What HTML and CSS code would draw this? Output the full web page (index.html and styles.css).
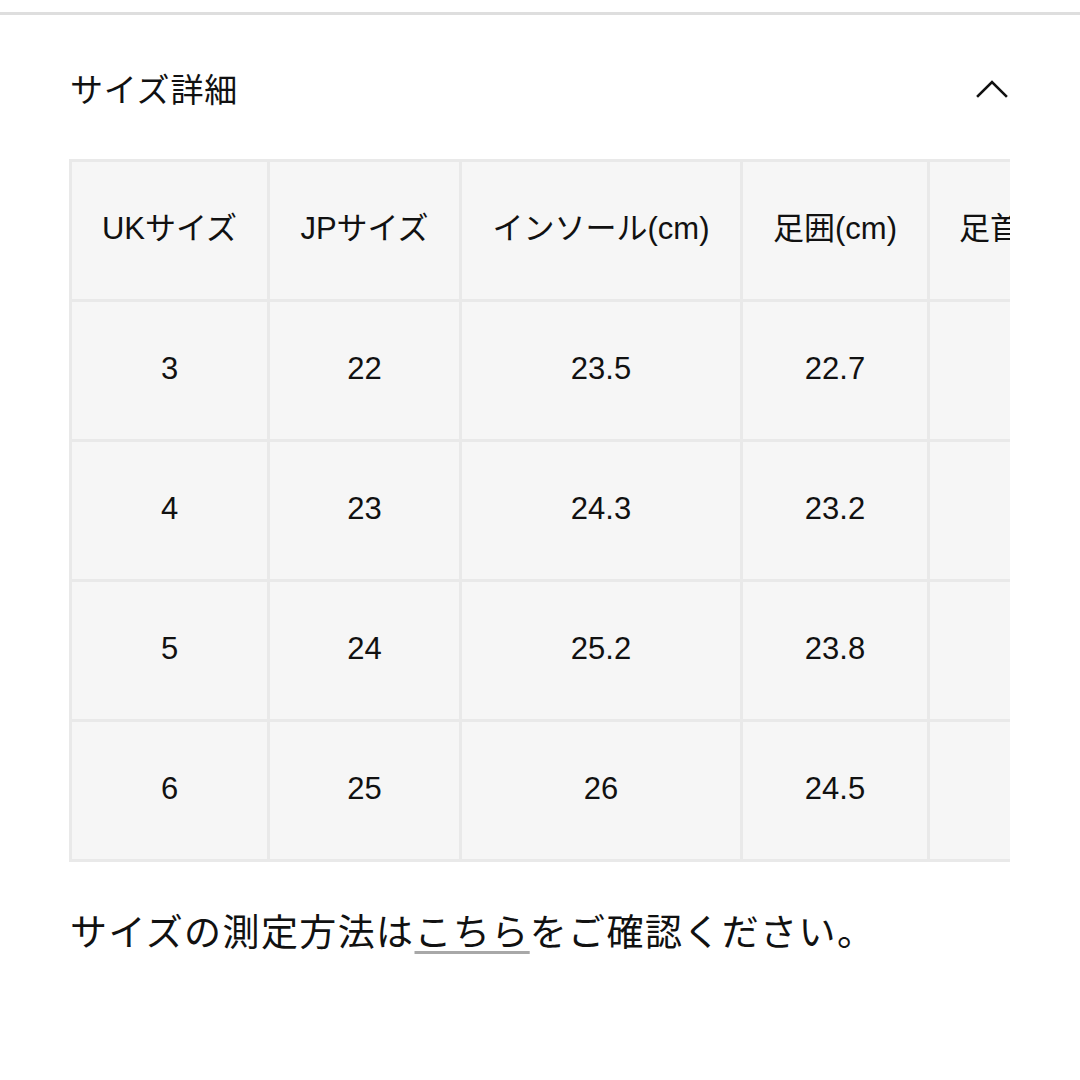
FILE: index.html
```html
<!DOCTYPE html>
<html lang="ja">
<head>
<meta charset="utf-8">
<title>サイズ詳細</title>
<link rel="stylesheet" href="styles.css">
</head>
<body>
<div class="page">
  <div class="rule"></div>
  <section class="details">
    <div class="head">
      <h2 class="title">サイズ詳細</h2>
      <svg class="chev" width="32" height="18" viewBox="0 0 32 18" aria-hidden="true">
        <polyline points="2,16 16,2 30,16" fill="none" stroke="#111" stroke-width="2.6" stroke-linecap="square"/>
      </svg>
    </div>
    <div class="table-wrap">
      <table class="size-table">
        <colgroup>
          <col class="c1"><col class="c2"><col class="c3"><col class="c4"><col class="c5">
        </colgroup>
        <tr><th>UKサイズ</th><th>JPサイズ</th><th>インソール(cm)</th><th>足囲(cm)</th><th class="clip">足首周り(cm)</th></tr>
        <tr><td>3</td><td>22</td><td>23.5</td><td>22.7</td><td></td></tr>
        <tr><td>4</td><td>23</td><td>24.3</td><td>23.2</td><td></td></tr>
        <tr><td>5</td><td>24</td><td>25.2</td><td>23.8</td><td></td></tr>
        <tr><td>6</td><td>25</td><td>26</td><td>24.5</td><td></td></tr>
      </table>
    </div>
    <p class="note">サイズの測定方法は<a class="link" href="#">こちら</a>をご確認ください。</p>
  </section>
</div>
</body>
</html>
```

FILE: styles.css
```css
html, body {
  margin: 0;
  padding: 0;
  background: #ffffff;
}

body {
  font-family: "Liberation Sans", "Noto Sans CJK JP", sans-serif;
  color: #111111;
}

.page {
  width: 1080px;
  height: 1080px;
  overflow: hidden;
}

.rule {
  margin-top: 12px;
  height: 3px;
  background: #dedede;
}

.details {
  padding: 0 70px;
}

.head {
  margin-top: 43px;
  height: 60px;
  display: flex;
  align-items: center;
  justify-content: space-between;
}

.title {
  margin: 0;
  font-size: 33px;
  letter-spacing: 0.8px;
  font-weight: 400;
  line-height: 60px;
  font-family: "Noto Sans CJK JP", sans-serif;
}

.chev {
  display: block;
  margin-right: 2px;
  margin-top: 2px;
}

.table-wrap {
  margin-top: 41px;
  margin-left: -1px;
  width: 941px;
  overflow: hidden;
}

.size-table {
  border-collapse: collapse;
  table-layout: fixed;
  width: 1058px;
}

.c1 { width: 198px; }
.c2 { width: 192px; }
.c3 { width: 281px; }
.c4 { width: 187px; }
.c5 { width: 200px; }

.size-table tr {
  height: 140px;
}

.size-table th,
.size-table td {
  background: #f6f6f6;
  border: 3px solid #e9e9e9;
  padding: 0 0 4px;
  text-align: center;
  vertical-align: middle;
  font-size: 31px;
  line-height: 36px;
  font-weight: 400;
  white-space: nowrap;
  overflow: hidden;
}

.size-table th.clip {
  text-align: left;
  padding-left: 29px;
}

.note {
  margin: 38px 0 0;
  font-size: 37px;
  letter-spacing: 1.4px;
  line-height: 60px;
  font-family: "Noto Sans CJK JP", sans-serif;
}

.link {
  color: inherit;
  text-decoration: underline;
  text-decoration-color: #a8a8a8;
  text-decoration-thickness: 3px;
  text-underline-offset: 5px;
}
```
